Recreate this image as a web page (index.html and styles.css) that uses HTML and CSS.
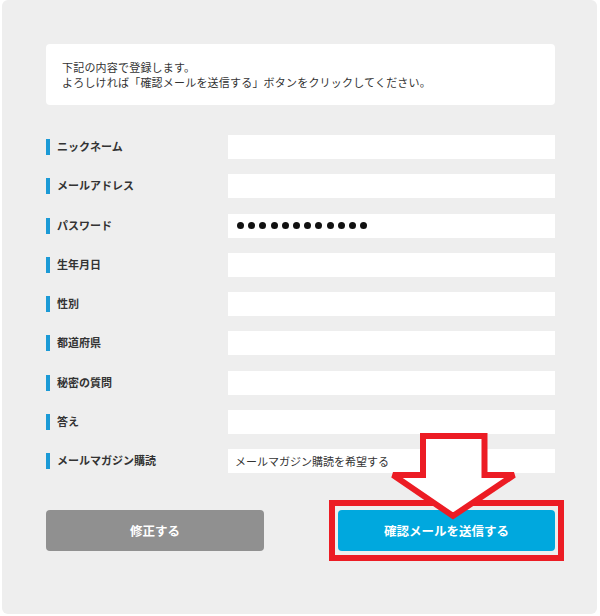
FILE: index.html
```html
<!DOCTYPE html>
<html lang="ja">
<head>
    <meta charset="UTF-8">
    <meta name="viewport" content="width=device-width, initial-scale=1.0">
    <title>登録内容の確認</title>
    <link rel="stylesheet" href="styles.css">
</head>
<body>
    <div class="panel">
        <div class="notice">
            <p>下記の内容で登録します。</p>
            <p>よろしければ「確認メールを送信する」ボタンをクリックしてください。</p>
        </div>

        <dl class="confirm-list">
            <div class="row"><dt class="label">ニックネーム</dt><dd class="value"></dd></div>
            <div class="row"><dt class="label">メールアドレス</dt><dd class="value"></dd></div>
            <div class="row">
                <dt class="label">パスワード</dt>
                <dd class="value dots">
                    <span></span><span></span><span></span><span></span><span></span><span></span>
                    <span></span><span></span><span></span><span></span><span></span><span></span>
                </dd>
            </div>
            <div class="row"><dt class="label">生年月日</dt><dd class="value"></dd></div>
            <div class="row"><dt class="label">性別</dt><dd class="value"></dd></div>
            <div class="row"><dt class="label">都道府県</dt><dd class="value"></dd></div>
            <div class="row"><dt class="label">秘密の質問</dt><dd class="value"></dd></div>
            <div class="row"><dt class="label">答え</dt><dd class="value"></dd></div>
            <div class="row"><dt class="label">メールマガジン購読</dt><dd class="value">メールマガジン購読を希望する</dd></div>
        </dl>

        <div class="actions">
            <button class="btn btn-back">修正する</button>
            <div class="send-wrap">
                <button class="btn btn-send">確認メールを送信する</button>
                <span class="highlight"></span>
            </div>
        </div>

        <svg class="arrow" width="140" height="100" viewBox="0 0 140 100">
            <polygon points="38,8 99.5,8 99.5,47 129,47 68,88 8,47 38,47" />
        </svg>
    </div>
</body>
</html>
```

FILE: styles.css
```css
* {
    box-sizing: border-box;
    margin: 0;
    padding: 0;
}

body {
    background: #fff;
    font-family: "Noto Sans CJK JP", "Noto Sans", sans-serif;
    color: #333;
}

.panel {
    position: relative;
    width: 595px;
    height: 614px;
    margin-left: 2px;
    padding: 44px 42px 0 44px;
    background: #eeeeee;
    border-radius: 6px;
}

.notice {
    background: #fff;
    border-radius: 4px;
    padding: 16px 16px 15px;
    font-size: 11px;
    line-height: 15px;
    letter-spacing: 0.2px;
}

.confirm-list {
    display: flex;
    flex-direction: column;
    gap: 15.25px;
    margin-top: 30px;
}

.row {
    display: flex;
    height: 24px;
}

.label {
    display: flex;
    align-items: center;
    gap: 7px;
    width: 182px;
    padding-bottom: 2px;
    font-size: 11px;
    font-weight: bold;
}

.label::before {
    content: "";
    width: 4px;
    height: 16px;
    margin-top: 2px;
    background: #1b9ad6;
}

.value {
    flex: 1;
    display: flex;
    align-items: center;
    padding-left: 7px;
    background: #fff;
    font-size: 11px;
}

.dots {
    gap: 4.2px;
    padding-left: 9px;
}

.dots span {
    width: 7px;
    height: 7px;
    border-radius: 50%;
    background: #111;
}

.actions {
    display: flex;
    justify-content: space-between;
    margin-top: 37px;
}

.btn {
    height: 41px;
    border: none;
    border-radius: 4px;
    color: #fff;
    font-family: inherit;
    font-size: 12.5px;
    font-weight: bold;
}

.btn-back {
    width: 218px;
    background: #909090;
}

.send-wrap {
    position: relative;
    width: 217px;
}

.btn-send {
    width: 100%;
    background: #00a8de;
}

.highlight {
    position: absolute;
    left: -9px;
    right: -9px;
    top: -10px;
    bottom: -10px;
    border: 6px solid #ec1c24;
}

.arrow {
    position: absolute;
    left: 383px;
    top: 428px;
}

.arrow polygon {
    fill: #fff;
    stroke: #ec1c24;
    stroke-width: 6;
    stroke-miterlimit: 2;
}
```
